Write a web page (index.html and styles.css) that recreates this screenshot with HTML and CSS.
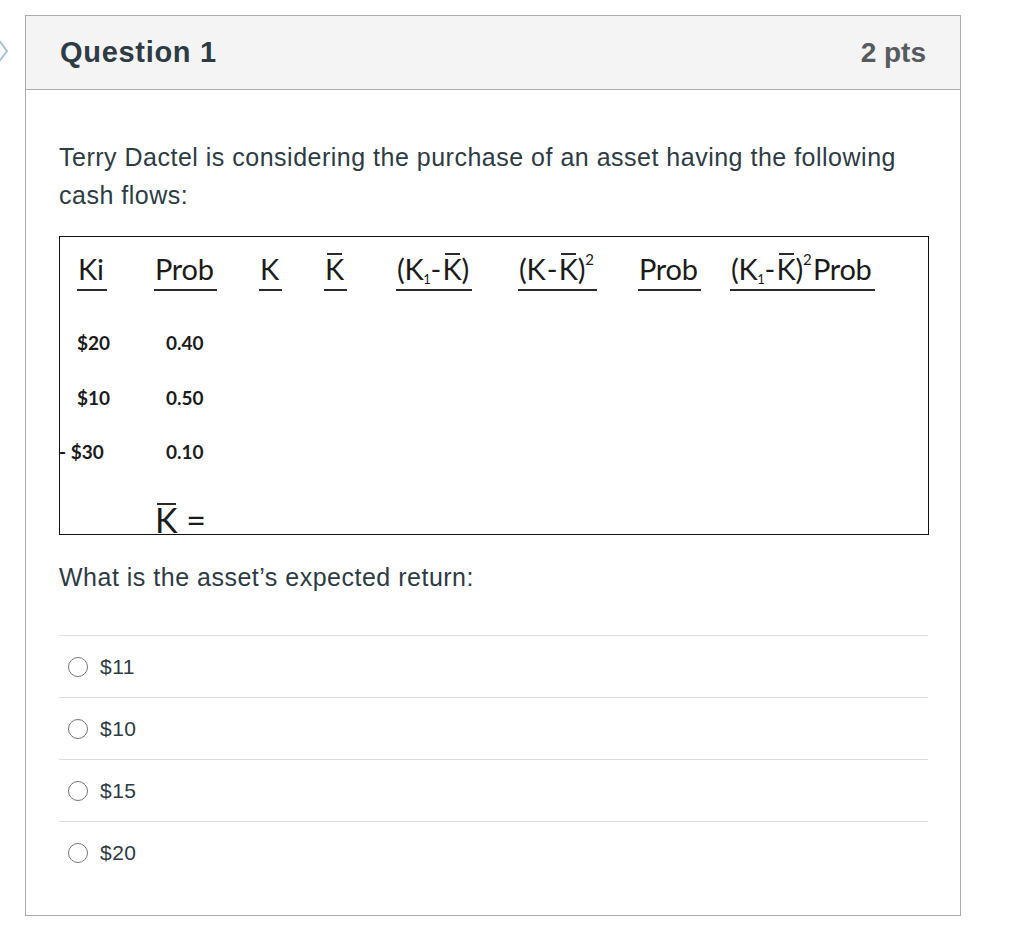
FILE: index.html
```html
<!DOCTYPE html>
<html lang="en">
<head>
<meta charset="utf-8">
<title>Question 1</title>
<link rel="stylesheet" href="styles.css">
</head>
<body>
<svg class="chevron" width="14" height="30" viewBox="0 0 14 30" aria-hidden="true">
  <path d="M1 3 L10 15 L1 27" fill="none" stroke="#a9c3d6" stroke-width="2"/>
</svg>
<div class="card">
  <div class="card-header">
    <h2 class="title">Question 1</h2>
    <span class="pts">2 pts</span>
  </div>
  <div class="card-body">
    <p class="text">Terry Dactel is considering the purchase of an asset having the following cash flows:</p>
    <div class="figure">
      <div class="grid">
        <div class="hd"><span class="u">Ki</span></div>
        <div class="hd"><span class="u">Prob</span></div>
        <div class="hd"><span class="u">K</span></div>
        <div class="hd"><span class="u"><span class="bar">K</span></span></div>
        <div class="hd"><span class="u">(K<sub>1</sub>-&#8202;<span class="bar">K</span>)</span></div>
        <div class="hd"><span class="u">(K&#8202;-&#8202;<span class="bar">K</span>)<sup>2</sup></span></div>
        <div class="hd"><span class="u">Prob</span></div>
        <div class="hd"><span class="u">(K<sub>1</sub>-&#8202;<span class="bar">K</span>)<sup>2</sup>&#8202;Prob</span></div>

        <div class="cell">$20</div>
        <div class="cell num">0.40</div>
        <div class="rest"></div>

        <div class="cell">$10</div>
        <div class="cell num">0.50</div>
        <div class="rest"></div>

        <div class="cell neg">- $30</div>
        <div class="cell num">0.10</div>
        <div class="rest"></div>

        <div class="cell"></div>
        <div class="kbar"><span class="bar">K</span>&nbsp;=</div>
        <div class="rest"></div>
      </div>
    </div>
    <p class="text question">What is the asset’s expected return:</p>
    <ul class="answers">
      <li class="answer"><span class="radio"></span><span class="label">$11</span></li>
      <li class="answer"><span class="radio"></span><span class="label">$10</span></li>
      <li class="answer"><span class="radio"></span><span class="label">$15</span></li>
      <li class="answer"><span class="radio"></span><span class="label">$20</span></li>
    </ul>
  </div>
</div>
</body>
</html>
```
FILE: styles.css
```css
html, body {
  margin: 0;
  padding: 0;
  background: #fff;
}
body {
  font-family: "Liberation Sans", Arial, sans-serif;
  color: #2d3b45;
  position: relative;
}
.chevron {
  position: absolute;
  left: -3px;
  top: 36px;
}
.card {
  margin: 15px 0 0 25px;
  width: 934px;
  border: 1px solid #acacac;
  box-shadow: 0 1px 0 #d4d4d4;
}
.card-header {
  background: #f4f4f4;
  border-bottom: 1px solid #acacac;
  height: 73px;
  display: flex;
  align-items: center;
  justify-content: space-between;
  padding: 0 34px 0 34px;
}
.title {
  margin: 0;
  font-size: 29px;
  letter-spacing: 0.7px;
  font-weight: bold;
  color: #2d3b45;
}
.pts {
  font-size: 28px;
  font-weight: bold;
  color: #555b60;
}
.card-body {
  padding: 48px 32px 32px 33px;
}
.text {
  margin: 0;
  font-size: 25px;
  letter-spacing: 0.5px;
  line-height: 38px;
}
.figure {
  margin: 22px 0 23px 0;
  width: 870px;
  height: 299px;
  border: 1.5px solid #111;
  box-sizing: border-box;
  font-family: Lato, "Open Sans", sans-serif;
  color: #1b1b1b;
}
.grid {
  display: grid;
  grid-template-columns: 77px 105px 65px 72px 122px 120px 92px 1fr;
  grid-template-rows: 62px 56px 54px 54px 62px;
  padding-left: 17px;
  padding-top: 15px;
}
.hd {
  font-size: 29px;
  line-height: 34px;
  letter-spacing: -0.3px;
  white-space: nowrap;
}
.u {
  display: inline-block;
  border-bottom: 2px solid #2a2a2a;
  padding: 0 3px 3px 1px;
}
.bar {
  position: relative;
}
.bar::before {
  content: "";
  position: absolute;
  left: 2px;
  right: 2px;
  top: 2px;
  border-top: 2px solid #2a2a2a;
}
sub, sup {
  line-height: 0;
}
sub {
  font-size: 13px;
  vertical-align: -4px;
}
sup {
  font-size: 15px;
  vertical-align: 15px;
}
.cell {
  font-size: 19px;
  font-weight: 700;
  display: flex;
  align-items: center;
}
.num {
  padding-left: 12px;
}
.neg {
  margin-left: -18px;
}
.rest {
  grid-column: 3 / 9;
}
.kbar {
  font-size: 34px;
  line-height: 40px;
  padding-top: 22px;
  padding-left: 1px;
  white-space: nowrap;
}
.kbar .bar::before {
  top: 4px;
}
.question {
  margin-bottom: 39px;
}
.answers {
  list-style: none;
  margin: 0;
  padding: 0;
}
.answer {
  border-top: 1px solid #dcdcdc;
  height: 61px;
  display: flex;
  align-items: center;
  padding-left: 9px;
}
.radio {
  width: 20px;
  height: 20px;
  border: 1px solid #777;
  border-radius: 50%;
  box-sizing: border-box;
  margin-right: 12px;
}
.label {
  font-size: 21px;
  letter-spacing: 0.5px;
  color: #2d3b45;
}
```
